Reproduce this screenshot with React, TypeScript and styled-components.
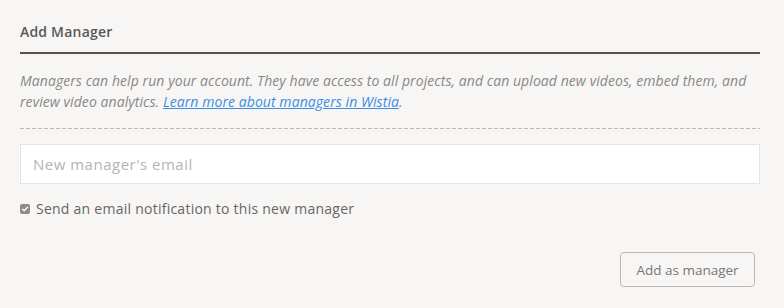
import React from "react";
import styled, { createGlobalStyle } from "styled-components";

const Global = createGlobalStyle`
  html, body { margin: 0; padding: 0; background: #f7f6f4; }
  body { font-family: "Open Sans", "Liberation Sans", sans-serif; }
`;

const Page = styled.div`
  width: 740px;
  padding: 0 24px 0 20px;
  box-sizing: content-box;
`;

const Header = styled.div`
  height: 52px;
  box-sizing: content-box;
  border-bottom: 2px solid #555350;
  display: flex;
  align-items: center;
`;

const Title = styled.h2`
  margin: 0;
  padding-top: 10px;
  font-size: 14px;
  font-weight: 600;
  color: #585858;
  letter-spacing: 0.2px;
`;

const Description = styled.p`
  margin: 0;
  padding: 16px 0 17px;
  font-size: 14px;
  line-height: 21px;
  font-style: italic;
  color: #888;
  letter-spacing: 0.07px;
  background-image: linear-gradient(to right, #bdbbb8 0 4px, transparent 4px 6px);
  background-size: 6px 1px;
  background-repeat: repeat-x;
  background-position: left bottom;
`;

const Link = styled.a`
  color: #3a8ee6;
  text-decoration: underline;
`;

const Form = styled.div`
  padding-top: 15px;
  display: flex;
  flex-direction: column;
`;

const EmailInput = styled.input`
  height: 40px;
  box-sizing: border-box;
  width: 100%;
  border: 1px solid #e6e4e1;
  background: #fff;
  padding: 0 12px;
  font-family: inherit;
  font-size: 15px;
  letter-spacing: 0.5px;
  color: #555;
  outline: none;
  &::placeholder { color: #b4b4b4; }
`;

const CheckRow = styled.label`
  margin-top: 15px;
  display: flex;
  align-items: center;
  gap: 6px;
  font-size: 14px;
  letter-spacing: 0.25px;
  color: #666;
`;

const Box = styled.span`
  width: 10px;
  height: 10px;
  border-radius: 2px;
  background: #8c8b8a;
  display: flex;
  align-items: center;
  justify-content: center;
`;

const Actions = styled.div`
  display: flex;
  justify-content: flex-end;
  padding: 34px 5px 0 0;
`;

const Button = styled.button`
  height: 35px;
  width: 135px;
  box-sizing: border-box;
  border: 1px solid #bcbab7;
  border-radius: 4px;
  background: transparent;
  font-family: inherit;
  font-size: 13.5px;
  color: #777;
  cursor: pointer;
`;

export default function App() {
  return (
    <>
      <Global />
      <Page>
        <Header>
          <Title>Add Manager</Title>
        </Header>
        <Description>
          Managers can help run your account. They have access to all projects, and can upload new videos, embed them, and review video analytics.{" "}
          <Link href="#">Learn more about managers in Wistia</Link>.
        </Description>
        <Form>
          <EmailInput placeholder="New manager's email" />
          <CheckRow>
            <Box>
              <svg width="8" height="8" viewBox="0 0 8 8">
                <path d="M1.5 4.2 L3.2 5.8 L6.5 2.2" fill="none" stroke="#fff" strokeWidth="1.3" strokeLinecap="round" strokeLinejoin="round" />
              </svg>
            </Box>
            Send an email notification to this new manager
          </CheckRow>
          <Actions>
            <Button>Add as manager</Button>
          </Actions>
        </Form>
      </Page>
    </>
  );
}
